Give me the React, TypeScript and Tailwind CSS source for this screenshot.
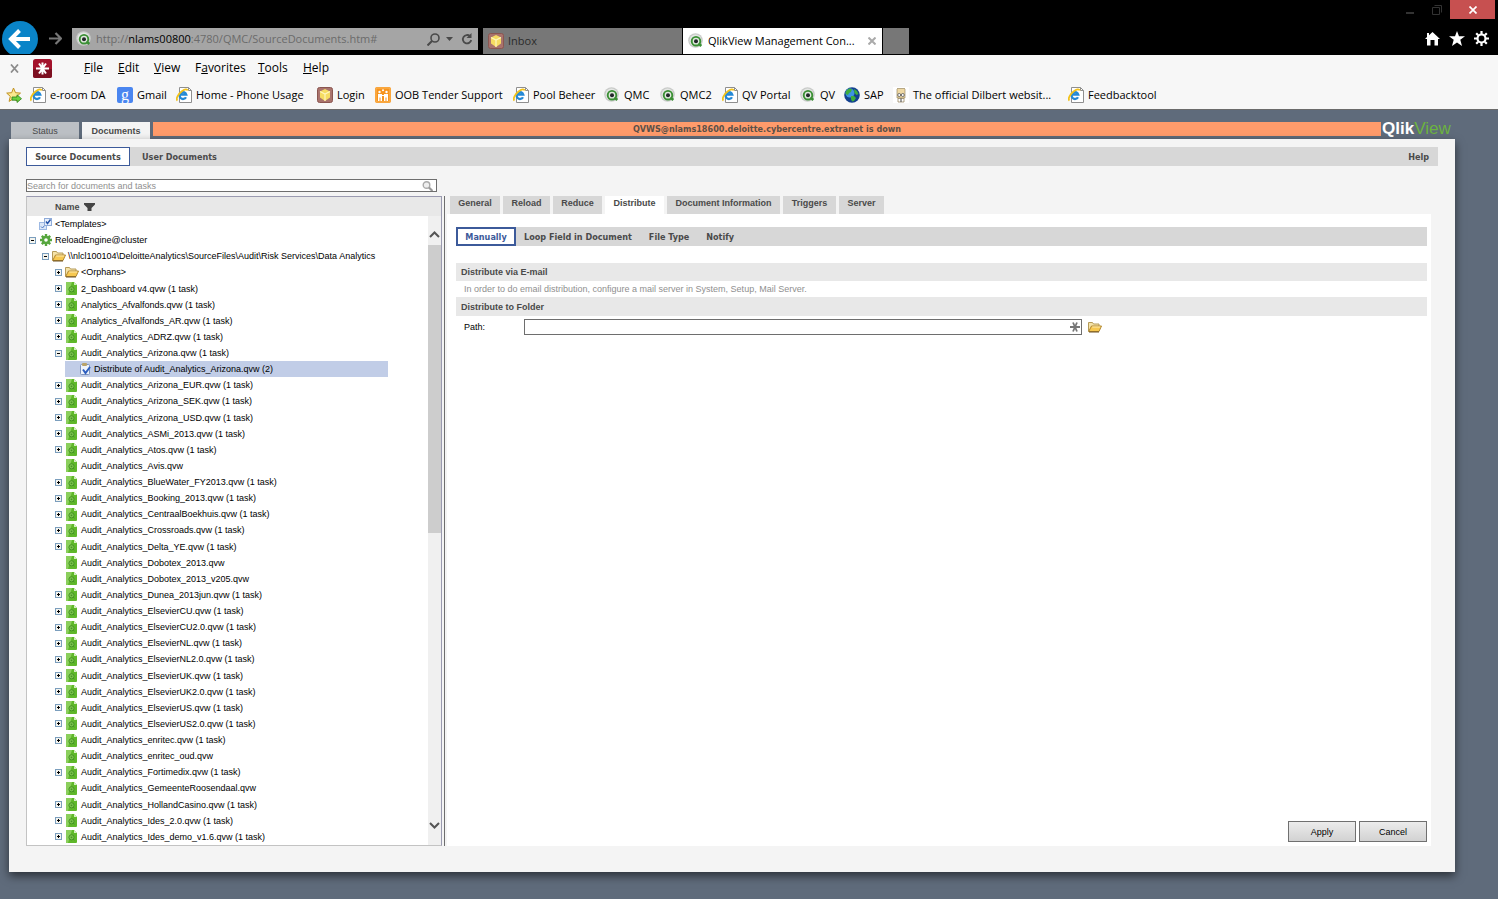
import { useState } from 'react';

const bookmarks = [
  { label: 'e-room DA', icon: 'ie', width: 'w-[79px]' },
  { label: 'Gmail', icon: 'google', width: 'w-[51px]' },
  { label: 'Home - Phone Usage', icon: 'ie', width: 'w-[133px]' },
  { label: 'Login', icon: 'box', width: 'w-[50px]' },
  { label: 'OOB Tender Support', icon: 'oob', width: 'w-[130px]' },
  { label: 'Pool Beheer', icon: 'ie', width: 'w-[83px]' },
  { label: 'QMC', icon: 'qlik', width: 'w-[48px]' },
  { label: 'QMC2', icon: 'qlik', width: 'w-[54px]' },
  { label: 'QV Portal', icon: 'ie', width: 'w-[70px]' },
  { label: 'QV', icon: 'qlik', width: 'w-[36px]' },
  { label: 'SAP', icon: 'globe', width: 'w-[41px]' },
  { label: 'The official Dilbert websit...', icon: 'dilbert', width: 'w-[167px]' },
  { label: 'Feedbacktool', icon: 'ie', width: 'w-[92px]' },
];

const menus = [
  { before: '', key: 'F', after: 'ile', width: 'w-[34px]' },
  { before: '', key: 'E', after: 'dit', width: 'w-9' },
  { before: '', key: 'V', after: 'iew', width: 'w-[41px]' },
  { before: 'F', key: 'a', after: 'vorites', width: 'w-[63px]' },
  { before: '', key: 'T', after: 'ools', width: 'w-[45px]' },
  { before: '', key: 'H', after: 'elp', width: 'w-9' },
];

// level = indent, box = expander sign ('' when the node has no children)
const doc = (label: string, box = '+') => ({ label, box, level: 2, icon: 'doc' });

const nodes = [
  { label: '<Templates>', box: '', level: 0, icon: 'template' },
  { label: 'ReloadEngine@cluster', box: '-', level: 0, icon: 'gear' },
  { label: '\\\\nlcl100104\\DeloitteAnalytics\\SourceFiles\\Audit\\Risk Services\\Data Analytics', box: '-', level: 1, icon: 'folder' },
  { label: '<Orphans>', box: '+', level: 2, icon: 'folder' },
  doc('2_Dashboard v4.qvw (1 task)'),
  doc('Analytics_Afvalfonds.qvw (1 task)'),
  doc('Analytics_Afvalfonds_AR.qvw (1 task)'),
  doc('Audit_Analytics_ADRZ.qvw (1 task)'),
  doc('Audit_Analytics_Arizona.qvw (1 task)', '-'),
  { label: 'Distribute of Audit_Analytics_Arizona.qvw (2)', box: '', level: 3, icon: 'task' },
  doc('Audit_Analytics_Arizona_EUR.qvw (1 task)'),
  doc('Audit_Analytics_Arizona_SEK.qvw (1 task)'),
  doc('Audit_Analytics_Arizona_USD.qvw (1 task)'),
  doc('Audit_Analytics_ASMi_2013.qvw (1 task)'),
  doc('Audit_Analytics_Atos.qvw (1 task)'),
  doc('Audit_Analytics_Avis.qvw', ''),
  doc('Audit_Analytics_BlueWater_FY2013.qvw (1 task)'),
  doc('Audit_Analytics_Booking_2013.qvw (1 task)'),
  doc('Audit_Analytics_CentraalBoekhuis.qvw (1 task)'),
  doc('Audit_Analytics_Crossroads.qvw (1 task)'),
  doc('Audit_Analytics_Delta_YE.qvw (1 task)'),
  doc('Audit_Analytics_Dobotex_2013.qvw', ''),
  doc('Audit_Analytics_Dobotex_2013_v205.qvw', ''),
  doc('Audit_Analytics_Dunea_2013jun.qvw (1 task)'),
  doc('Audit_Analytics_ElsevierCU.qvw (1 task)'),
  doc('Audit_Analytics_ElsevierCU2.0.qvw (1 task)'),
  doc('Audit_Analytics_ElsevierNL.qvw (1 task)'),
  doc('Audit_Analytics_ElsevierNL2.0.qvw (1 task)'),
  doc('Audit_Analytics_ElsevierUK.qvw (1 task)'),
  doc('Audit_Analytics_ElsevierUK2.0.qvw (1 task)'),
  doc('Audit_Analytics_ElsevierUS.qvw (1 task)'),
  doc('Audit_Analytics_ElsevierUS2.0.qvw (1 task)'),
  doc('Audit_Analytics_enritec.qvw (1 task)'),
  doc('Audit_Analytics_enritec_oud.qvw', ''),
  doc('Audit_Analytics_Fortimedix.qvw (1 task)'),
  doc('Audit_Analytics_GemeenteRoosendaal.qvw', ''),
  doc('Audit_Analytics_HollandCasino.qvw (1 task)'),
  doc('Audit_Analytics_Ides_2.0.qvw (1 task)'),
  doc('Audit_Analytics_Ides_demo_v1.6.qvw (1 task)'),
];

const indents = ['pl-[2px]', 'pl-[15px]', 'pl-[28px]', 'pl-[41px]'];

const paneTabs = [
  { label: 'General', width: 'w-[50px]' },
  { label: 'Reload', width: 'w-[47px]' },
  { label: 'Reduce', width: 'w-[49px]' },
  { label: 'Distribute', width: 'w-[59px]' },
  { label: 'Document Information', width: 'w-[113px]' },
  { label: 'Triggers', width: 'w-[53px]' },
  { label: 'Server', width: 'w-[45px]' },
];

function QlikIcon() {
  return (
    <svg viewBox="0 0 16 16" className="size-4 shrink-0">
      <circle cx="7.500" cy="7.500" r="7.300" fill="#c9cbc9" />
      <circle cx="7.500" cy="7.500" r="6" fill="#e4e6e4" />
      <circle cx="8" cy="8.200" r="4.300" fill="#dfe9dc" stroke="#3a8f34" strokeWidth="1.900" />
      <path d="M10.500 10.500l2.800 2.500" stroke="#3a8f34" strokeWidth="2.400" />
      <circle cx="8" cy="8.200" r="2" fill="#23272b" />
    </svg>
  );
}

function BoxIcon() {
  return (
    <svg viewBox="0 0 16 16" className="size-4 shrink-0">
      <rect x=".5" y=".5" width="15" height="15" rx="2" fill="#a9736d" stroke="#8a5650" />
      <path d="M8 2l5 2.500v6L8 14l-5-3.500v-6z" fill="#f6dc62" />
      <path d="M3 4.500L8 7l5-2.500M8 7v7" fill="none" stroke="#fff6bd" strokeWidth="1.200" />
    </svg>
  );
}

function BookmarkIcon({ name }: { name: string }) {
  if (name === 'qlik') return <QlikIcon />;
  if (name === 'box') return <BoxIcon />;
  if (name === 'google') {
    return (
      <span className="flex size-4 shrink-0 items-center justify-center rounded-[2px] bg-[#4a86f0] font-['Liberation_Serif',serif] text-[16px] leading-none text-white">
        g
      </span>
    );
  }
  if (name === 'oob') {
    return (
      <svg viewBox="0 0 16 16" className="size-4 shrink-0">
        <rect width="16" height="16" rx="2" fill="#f7941e" />
        <rect x="1" y="1" width="14" height="14" rx="1" fill="none" stroke="#fbb85c" />
        <circle cx="4.500" cy="5" r="1.200" fill="#fff" />
        <circle cx="11.500" cy="5" r="1.200" fill="#fff" />
        <circle cx="8" cy="3.200" r="1" fill="#fff" />
        <path d="M3 7h4v7H3zM9 7h4v7H9z" fill="#fff" />
        <path d="M5 10.500V14M11 10.500V14" stroke="#f7941e" />
        <path d="M7 8.500h2" stroke="#fff" />
      </svg>
    );
  }
  if (name === 'globe') {
    return (
      <svg viewBox="0 0 16 16" className="size-4 shrink-0">
        <circle cx="8" cy="8" r="7.800" fill="#12408f" />
        <circle cx="6" cy="6" r="4.500" fill="#3d93e2" />
        <path d="M2 4l3-2.500 3 .5-1 3-2 1-1 2-2.500-1zM7 9l3 0 2 2-2 3-2 .5-1-2.500zM10 2l3 2 1.500 3-2 1-2-2z" fill="#3fae3c" />
      </svg>
    );
  }
  if (name === 'dilbert') {
    return (
      <svg viewBox="0 0 16 16" className="size-4 shrink-0">
        <rect width="16" height="16" fill="#fff" />
        <path d="M4 2l1-1 1 1 1-1 1 1 1-1 1 1 1-1 1 1v9H4z" fill="#efd9a4" stroke="#8c7a50" strokeWidth=".6" />
        <circle cx="6.200" cy="8" r="1.500" fill="#fff" stroke="#555" strokeWidth=".8" />
        <circle cx="9.800" cy="8" r="1.500" fill="#fff" stroke="#555" strokeWidth=".8" />
        <path d="M5 11.500h6V15H5z" fill="#fff" stroke="#8c7a50" strokeWidth=".7" />
        <path d="M8 11.500V15" stroke="#444" />
      </svg>
    );
  }
  return (
    <svg viewBox="0 0 16 16" className="size-4 shrink-0">
      <path d="M3.500.5h9l3 3v12h-12z" fill="#fff" stroke="#8f8f8f" />
      <path d="M12.500.5v3h3" fill="none" stroke="#8f8f8f" />
      <path d="M10 10.200a3.400 3.400 0 1 1 .3-2.500H4" fill="none" stroke="#2489d6" strokeWidth="2.300" />
      <path d="M1.500 13.500c-2-1.500.5-6.500 4.700-9.500 2.500-1.700 5-2.200 5.500-.5" fill="none" stroke="#f2c21b" strokeWidth="1.800" />
    </svg>
  );
}

function FolderIcon() {
  return (
    <svg viewBox="0 0 14 12" className="h-3 w-[14px] shrink-0">
      <path d="M.5 10.500v-9h4l1 1.500h5.500V5" fill="#f5e3a8" stroke="#b59a58" />
      <path d="M.7 10.500L3.500 5h10l-2.500 5.500z" fill="#f7c850" stroke="#b08732" />
      <path d="M4.200 6h8" stroke="#fdeab0" />
      <path d="M1 11h10" stroke="#6e5222" />
    </svg>
  );
}

function NodeIcon({ name }: { name: string }) {
  if (name === 'folder') return <FolderIcon />;
  if (name === 'template') {
    return (
      <svg viewBox="0 0 13 12" className="h-3 w-[13px]">
        <rect x=".5" y="4.500" width="7" height="7" fill="#dbe7f8" stroke="#9db9e3" />
        <path d="M2 8.500l1.500 1.500L6 7" fill="none" stroke="#4d78c4" />
        <rect x="5.500" y=".5" width="7" height="7" fill="#e8f0fb" stroke="#8fabd9" />
        <path d="M7 3.500l1.500 2 3-4" fill="none" stroke="#2453a8" strokeWidth="1.400" />
      </svg>
    );
  }
  if (name === 'gear') {
    return (
      <svg viewBox="0 0 12 12" className="size-3">
        <path d="M6 0v12M0 6h12M1.800 1.800l8.400 8.400M10.200 1.800l-8.400 8.400" stroke="#56a63d" strokeWidth="2.400" />
        <circle cx="6" cy="6" r="3" fill="#fff" stroke="#56a63d" strokeWidth="2.400" />
      </svg>
    );
  }
  if (name === 'task') {
    return (
      <svg viewBox="0 0 12 12" className="size-3">
        <rect x="1.500" y="1.500" width="9" height="10" rx="1" fill="#eef3fb" stroke="#7d93bd" />
        <rect x="3" width="5" height="3" rx="1" fill="#b9a36a" />
        <path d="M4 6.500L6.500 10 11 4" fill="none" stroke="#2d5fc0" strokeWidth="2" />
      </svg>
    );
  }
  return (
    <svg viewBox="0 0 11 13" className="h-[13px] w-[11px]">
      <path d="M1 0h7l3 3v9a1 1 0 0 1-1 1H1a1 1 0 0 1-1-1V1a1 1 0 0 1 1-1z" fill="#5fb82a" />
      <path d="M1 0h5L2 13H1a1 1 0 0 1-1-1V1a1 1 0 0 1 1-1z" fill="#8bcf5c" />
      <path d="M8 0v3h3z" fill="#d5efc2" />
      <circle cx="5.500" cy="7.300" r="2.600" fill="#7cc44d" stroke="#459425" />
      <circle cx="5.500" cy="7.300" r=".9" fill="#459425" />
      <path d="M7 9l1.500 1.200" stroke="#459425" />
    </svg>
  );
}

function Expander({ sign }: { sign: string }) {
  if (!sign) return <span className="w-[7px] shrink-0" />;
  return (
    <button type="button" aria-label={sign === '+' ? 'Expand' : 'Collapse'} className="size-[7px] shrink-0">
      <svg viewBox="0 0 7 7" className="block size-[7px]">
        <rect x=".5" y=".5" width="6" height="6" fill="#f4f4ee" stroke="#7b9ebd" />
        <path d={sign === '+' ? 'M2 3.500h3M3.500 2v3' : 'M2 3.500h3'} stroke="#000" />
      </svg>
    </button>
  );
}

function BrowserChrome() {
  return (
    <header className="font-['Open_Sans',sans-serif] text-[11px]">
      <div className="bg-black">
        <div className="flex h-[19px] justify-end pr-[3px]">
          <button type="button" aria-label="Minimize" className="flex w-[26px] items-center justify-center">
            <svg viewBox="0 0 8 8" className="size-2"><path d="M0 7h8" stroke="#333" strokeWidth="2" /></svg>
          </button>
          <button type="button" aria-label="Restore" className="flex w-[27px] items-center justify-center">
            <svg viewBox="0 0 10 10" className="size-[10px]"><path d="M.5 2.500h7v7h-7zM2.500.5h7v7" fill="none" stroke="#333" /></svg>
          </button>
          <button type="button" aria-label="Close" className="flex w-[45px] items-center justify-center bg-[#c75050]">
            <svg viewBox="0 0 8 8" className="size-2"><path d="M.5 .5l7 7M7.500 .5l-7 7" stroke="#fff" strokeWidth="1.700" /></svg>
          </button>
        </div>
        <div className="flex h-9 items-start pr-[9px]">
          <button type="button" aria-label="Back" className="ml-[2px] h-[35px] w-9 shrink-0 overflow-hidden pt-[2px]">
            <svg viewBox="0 0 36 36" className="size-9">
              <circle cx="18" cy="18" r="18" fill="#0a84c8" />
              <path d="M28 18H9.500M17.500 9.500L9 18l8.500 8.500" fill="none" stroke="#fff" strokeWidth="4" />
            </svg>
          </button>
          <button type="button" aria-label="Forward" className="ml-[11px] mt-[13px] shrink-0">
            <svg viewBox="0 0 13 13" className="size-[13px]"><path d="M0 6.500h11.500M6.500 1l5.500 5.500L6.500 12" fill="none" stroke="#777" strokeWidth="2.200" /></svg>
          </button>
          <div className="ml-[10px] mt-[9px] flex h-[22px] w-[406px] items-center bg-[#a5a5a5] pl-[4px] pr-[5px]">
            <QlikIcon />
            <span className="ml-1 flex-1 whitespace-nowrap text-[#6b6b6b]">
              http://<span className="text-black">nlams00800</span>:4780/QMC/SourceDocuments.htm#
            </span>
            <svg viewBox="0 0 13 13" className="size-[13px]"><circle cx="8" cy="5" r="4" fill="none" stroke="#4a4a4a" strokeWidth="1.600" /><path d="M5 8l-4.500 4.500" stroke="#4a4a4a" strokeWidth="2" /></svg>
            <svg viewBox="0 0 7 4" className="ml-[6px] h-1 w-[7px]"><path d="M0 0h7L3.500 4z" fill="#4a4a4a" /></svg>
            <svg viewBox="0 0 12 12" className="ml-[8px] size-3"><path d="M9 3.200A4.200 4.200 0 1 0 10.200 7" fill="none" stroke="#4a4a4a" strokeWidth="1.800" /><path d="M10.500 0v5H5.500z" fill="#4a4a4a" /></svg>
          </div>
          <div className="ml-[5px] mt-[9px] flex h-[26px]">
            <button type="button" className="flex w-[199px] items-center gap-1 bg-[#777] pl-[5px] text-[#2b2b2b]">
              <BoxIcon /> Inbox
            </button>
            <div className="ml-px flex w-[199px] items-center bg-white pl-[5px] pr-[6px]">
              <QlikIcon />
              <span className="ml-1 flex-1 whitespace-nowrap text-black">QlikView Management Con...</span>
              <button type="button" aria-label="Close tab">
                <svg viewBox="0 0 8 8" className="block size-2"><path d="M.5 .5l7 7M7.500 .5l-7 7" stroke="#aaa" strokeWidth="2" /></svg>
              </button>
            </div>
            <button type="button" aria-label="New tab" className="ml-px w-[26px] bg-[#777]" />
          </div>
          <div className="ml-auto mt-3 flex gap-[9px]">
            <button type="button" aria-label="Home">
              <svg viewBox="0 0 15 15" className="size-[15px]"><path d="M7.500 1L15 8h-2v6.500H9.500V9h-4v5.500H2V8H0l2-2V2h2v2.200z" fill="#fff" /></svg>
            </button>
            <button type="button" aria-label="Favorites">
              <svg viewBox="0 0 16 15" className="h-[15px] w-4"><path d="M8 0l2 5.300h6l-4.700 3.500L13 15l-5-3.600L3 15l1.700-6.200L0 5.300h6z" fill="#fff" /></svg>
            </button>
            <button type="button" aria-label="Tools">
              <svg viewBox="0 0 15 15" className="size-[15px]">
                <circle cx="7.500" cy="7.500" r="4" fill="none" stroke="#fff" strokeWidth="2.200" />
                <path d="M7.500 0v3M7.500 12v3M0 7.500h3M12 7.500h3M2.200 2.200l2 2M10.800 10.800l2 2M2.200 12.800l2-2M10.800 4.200l2-2" stroke="#fff" strokeWidth="2.200" />
              </svg>
            </button>
          </div>
        </div>
      </div>
      <div className="border-b border-[#6b6b6b] bg-[#f7f7f7]">
        <div className="flex h-[26px] items-center">
          <button type="button" aria-label="Close toolbar" className="ml-[10px]">
            <svg viewBox="0 0 9 9" className="block size-[9px]"><path d="M1 .5l7 8M8 .5l-7 8" stroke="#8d8d8d" strokeWidth="1.800" /></svg>
          </button>
          <button type="button" aria-label="LastPass" className="ml-[14px]">
            <svg viewBox="0 0 19 19" className="block size-[19px]">
              <rect width="19" height="19" rx="2.500" fill="#a3122b" />
              <path d="M0 10h19v6.500a2.500 2.500 0 0 1-2.500 2.500h-14A2.500 2.500 0 0 1 0 16.500z" fill="#7d0f20" />
              <path d="M9.500 3.500v12M3 9.500h13M6 4.500l7 10M13 4.500l-7 10" stroke="#fff" strokeWidth="2" />
            </svg>
          </button>
          <nav className="ml-8 flex">
            {menus.map((m) => (
              <button key={m.key} type="button" className={`${m.width} text-left text-[12px]`}>
                {m.before}<u>{m.key}</u>{m.after}
              </button>
            ))}
          </nav>
        </div>
        <div className="flex h-7 items-center gap-2 pl-[6px]">
          <button type="button" aria-label="Add to favorites" className="shrink-0">
            <svg viewBox="0 0 16 16" className="block size-4">
              <path d="M7.500 1l2 4.700 5 .4-3.800 3.300 1.200 5-4.400-2.700-4.400 2.700 1.200-5L.7 6.100l5-.4z" fill="#fbe98e" stroke="#c09020" />
              <path d="M6 10h5V7.800l4.500 3.900-4.500 3.800v-2.300H6z" fill="#6bd33f" stroke="#2e7d1c" strokeWidth=".8" />
            </svg>
          </button>
          {bookmarks.map((b) => (
            <a key={b.label} href="#" className={`${b.width} flex shrink-0 items-center gap-1 whitespace-nowrap`}>
              <BookmarkIcon name={b.icon} />
              {b.label}
            </a>
          ))}
        </div>
      </div>
    </header>
  );
}

function SourceTree() {
  const [selected, setSelected] = useState(9);

  return (
    <div className="flex flex-1 flex-col border border-[#c3c3c3] border-r-[#9a9ab0] border-t-[#9a9ab0] bg-white">
      <div className="flex h-[19px] items-center gap-1 bg-[#e8e8e8] pl-[28px] font-bold text-[#4a4a4a]">
        Name
        <svg viewBox="0 0 11 8" className="h-2 w-[11px]"><path d="M0 0h11v1.500L7.500 5v3h-4V5L0 1.500z" fill="#444" /></svg>
      </div>
      <div className="flex flex-1">
        <ul className="flex flex-1 flex-col">
          {nodes.map((node, i) => (
            <li key={node.label} className="flex min-h-4 flex-1">
              {i === selected ? (
                <div className="ml-[38px] flex w-[323px] items-center gap-[3px] bg-[#c1cde7] pl-[13px]">
                  <span className="flex w-[13px] shrink-0 justify-center"><NodeIcon name={node.icon} /></span>
                  <button type="button" className="whitespace-nowrap">{node.label}</button>
                </div>
              ) : (
                <div className={`flex items-center gap-[3px] ${indents[node.level]}`}>
                  <Expander sign={node.box} />
                  <span className="flex w-[13px] shrink-0 justify-center"><NodeIcon name={node.icon} /></span>
                  <button type="button" onClick={() => setSelected(i)} className="whitespace-nowrap">{node.label}</button>
                </div>
              )}
            </li>
          ))}
        </ul>
        <div className="flex w-[13px] flex-col items-center bg-[#f0f0f0]">
          <svg viewBox="0 0 11 7" className="mb-[7px] mt-[15px] h-[7px] w-[11px] shrink-0"><path d="M1 6l4.500-4.500L10 6" fill="none" stroke="#555" strokeWidth="2" /></svg>
          <div className="h-[288px] w-full bg-[#cdcdcd]" />
          <svg viewBox="0 0 11 7" className="mb-4 mt-auto h-[7px] w-[11px] shrink-0"><path d="M1 1l4.500 4.500L10 1" fill="none" stroke="#555" strokeWidth="2" /></svg>
        </div>
      </div>
    </div>
  );
}

function DistributePane() {
  const [path, setPath] = useState('');

  return (
    <section className="flex flex-1 flex-col">
      <nav className="flex gap-[3px] pl-[3px] font-bold text-[#4a4a4a]">
        {paneTabs.map((tab) => (
          <button
            key={tab.label}
            type="button"
            className={`${tab.width} h-[18px] pb-1 ${tab.label === 'Distribute' ? 'bg-white' : 'bg-[#d7d7d7]'}`}
          >
            {tab.label}
          </button>
        ))}
      </nav>
      <div className="flex flex-1 flex-col bg-white pb-1 pl-[9px] pr-1 pt-[13px]">
        <nav className="mb-[17px] flex h-[19px] items-center gap-[17px] bg-[#d7d7d7] font-['DejaVu_Sans_Condensed','DejaVu_Sans',sans-serif] font-bold text-[#4a4a4a]">
          <button type="button" className="-mr-[9px] h-[19px] w-[60px] border-2 border-[#3c5a9a] bg-white text-[#3c5a9a]">
            Manually
          </button>
          <button type="button">Loop Field in Document</button>
          <button type="button">File Type</button>
          <button type="button">Notify</button>
        </nav>
        <h2 className="flex h-[18px] items-center bg-[#e8e8e8] pl-[5px] font-bold text-[#4a4a4a]">Distribute via E-mail</h2>
        <p className="flex h-4 items-center pl-2 text-[#8f8f8f]">
          In order to do email distribution, configure a mail server in System, Setup, Mail Server.
        </p>
        <h2 className="flex h-[19px] items-center bg-[#e8e8e8] pl-[5px] font-bold text-[#4a4a4a]">Distribute to Folder</h2>
        <div className="mt-[3px] flex items-center pl-2">
          <label htmlFor="path" className="w-[60px]">Path:</label>
          <div className="flex h-4 w-[558px] items-center border border-[#6e6e6e] bg-white pr-px">
            <input id="path" type="text" value={path} onChange={(e) => setPath(e.target.value)} className="h-full min-w-0 flex-1 px-1 outline-none" />
            <svg viewBox="0 0 10 10" className="size-[10px]"><path d="M0 5h10M3 .5l4 9M7 .5l-4 9" stroke="#777" strokeWidth="1.800" /></svg>
          </div>
          <button type="button" aria-label="Browse" className="ml-[6px]"><FolderIcon /></button>
        </div>
        <div className="mt-auto flex justify-end gap-[3px]">
          <button type="button" className="h-[21px] w-[68px] border border-[#707070] bg-linear-to-b from-[#ececec] to-[#d2d2d2]">Apply</button>
          <button type="button" className="h-[21px] w-[68px] border border-[#707070] bg-linear-to-b from-[#ececec] to-[#d2d2d2]">Cancel</button>
        </div>
      </div>
    </section>
  );
}

export default function App() {
  const [search, setSearch] = useState('');

  return (
    <div className="flex min-h-screen flex-col border-b border-white bg-[#5f6b7b] text-black">
      <BrowserChrome />
      <div className="flex flex-1 flex-col pb-[27px] pl-[9px] pr-[43px] pt-3 font-['Liberation_Sans',Arial,sans-serif] text-[9px] leading-3">
        <div className="flex items-start gap-[3px] pl-[2px]">
          <button type="button" className="h-[17px] w-[68px] bg-[#bcc0c5] text-[#4a4a4a]">Status</button>
          <button type="button" className="h-[17px] w-[68px] bg-[#f4f4f4] font-bold text-[#4a4a4a]">Documents</button>
          <div className="flex h-[14px] flex-1 items-center justify-center bg-[#ff9b6b] font-['DejaVu_Sans_Condensed','DejaVu_Sans',sans-serif] font-bold text-[#5b5048]">
            QVWS@nlams18600.deloitte.cybercentre.extranet is down
          </div>
          <div className="-ml-[2px] flex h-[14px] w-[73px] items-center text-[17px] text-[#6cb33f]">
            <b className="text-white">Qlik</b>View
          </div>
        </div>

        <main className="flex flex-1 flex-col bg-[#f4f4f4] pb-[26px] pl-[17px] pt-2 shadow-[0_4px_9px_rgba(0,0,0,0.55)]">
          <nav className="mr-[17px] flex h-[19px] items-center bg-[#d7d7d7] font-['DejaVu_Sans_Condensed','DejaVu_Sans',sans-serif] font-bold text-[#4a4a4a]">
            <button type="button" className="h-[19px] w-[104px] border border-[#3c5a9a] bg-white">Source Documents</button>
            <button type="button" className="ml-3">User Documents</button>
            <a href="#" className="ml-auto mr-[9px]">Help</a>
          </nav>

          <div className="mt-[13px] flex h-[13px] w-[411px] items-center border border-[#6e6e6e] bg-white pr-[3px]">
            <input
              type="text"
              aria-label="Search for documents and tasks"
              placeholder="Search for documents and tasks"
              value={search}
              onChange={(e) => setSearch(e.target.value)}
              className="h-full min-w-0 flex-1 outline-none placeholder:text-[#8f8f8f]"
            />
            <svg viewBox="0 0 11 10" className="h-[10px] w-[11px]"><circle cx="4.500" cy="4" r="3.300" fill="#eee" stroke="#aaa" strokeWidth="1.400" /><path d="M7 6.500l3.500 3.500" stroke="#999" strokeWidth="2.200" /></svg>
          </div>

          <div className="mt-1 flex flex-1 pr-6">
            <div className="flex w-[416px] shrink-0 flex-col">
              <SourceTree />
            </div>
            <div className="mx-[2px] w-px bg-[#6e6e6e]" />
            <DistributePane />
          </div>
        </main>
      </div>
    </div>
  );
}
